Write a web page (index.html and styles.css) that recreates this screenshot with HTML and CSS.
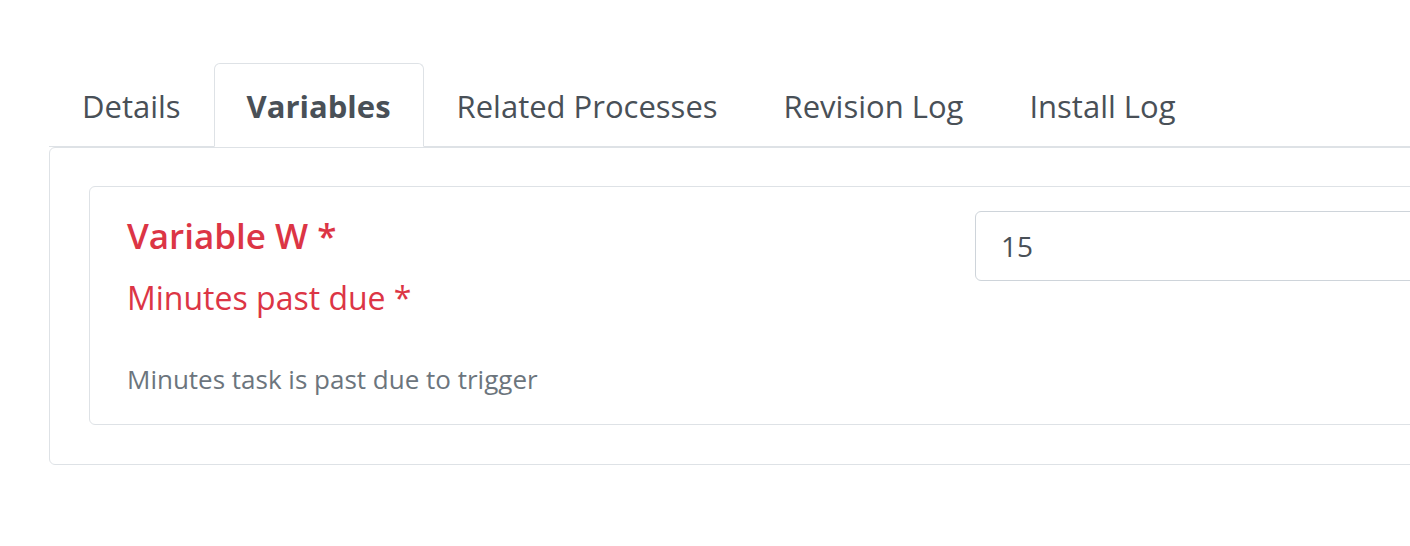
FILE: index.html
```html
<!DOCTYPE html>
<html lang="en">
<head>
    <meta charset="UTF-8">
    <title>Variables</title>
    <link rel="stylesheet" href="styles.css">
</head>
<body>
<div id="page">
    <ul class="tabs">
        <li class="tab">Details</li>
        <li class="tab active">Variables</li>
        <li class="tab">Related Processes</li>
        <li class="tab">Revision Log</li>
        <li class="tab">Install Log</li>
    </ul>
    <div class="panel">
        <div class="card">
            <div class="field">
                <div class="label-col">
                    <h4 class="var-name">Variable W *</h4>
                    <label class="var-label">Minutes past due *</label>
                    <p class="hint">Minutes task is past due to trigger</p>
                </div>
                <div class="input-col">
                    <input type="text" class="input" value="15">
                </div>
            </div>
        </div>
    </div>
</div>
</body>
</html>
```

FILE: styles.css
```css
* {
    margin: 0;
    padding: 0;
    box-sizing: border-box;
}

body {
    font-family: "Open Sans", "Noto Sans", sans-serif;
    color: #495057;
    background: #fff;
    overflow: hidden;
}

#page {
    width: 1500px;
    padding: 63px 0 0 49px;
}

.tabs {
    list-style: none;
    display: flex;
    border-bottom: 1px solid #dee2e6;
}

.tab {
    font-size: 31px;
    line-height: 46px;
    padding: 19px 32px 17px;
    margin-bottom: -1px;
    border: 1px solid transparent;
    border-radius: 6px 6px 0 0;
    color: #495057;
}

.tab.active {
    font-weight: 700;
    background: #fff;
    border-color: #dee2e6 #dee2e6 #fff;
}

.panel {
    border: 1px solid #dee2e6;
    border-radius: 6px;
    padding: 38px 39px 39px;
}

.card {
    border: 1px solid #dee2e6;
    border-radius: 6px;
    padding: 24px 37px 27px;
}

.field {
    display: flex;
}

.label-col {
    width: 848px;
}

.input-col {
    flex: 1;
}

.var-name {
    margin-top: 2px;
    font-size: 35px;
    font-weight: 600;
    line-height: 46px;
    color: #dc3545;
}

.var-label {
    display: block;
    margin-top: 17px;
    font-size: 32px;
    line-height: 44px;
    color: #dc3545;
}

.hint {
    margin-top: 41px;
    font-size: 26px;
    line-height: 36px;
    color: #6c757d;
}

.input {
    display: block;
    width: 100%;
    height: 70px;
    padding: 0 25px;
    font-family: "Open Sans", "Noto Sans", sans-serif;
    font-size: 28px;
    color: #495057;
    border: 1px solid #ced4da;
    border-radius: 6px;
    outline: none;
}
```
